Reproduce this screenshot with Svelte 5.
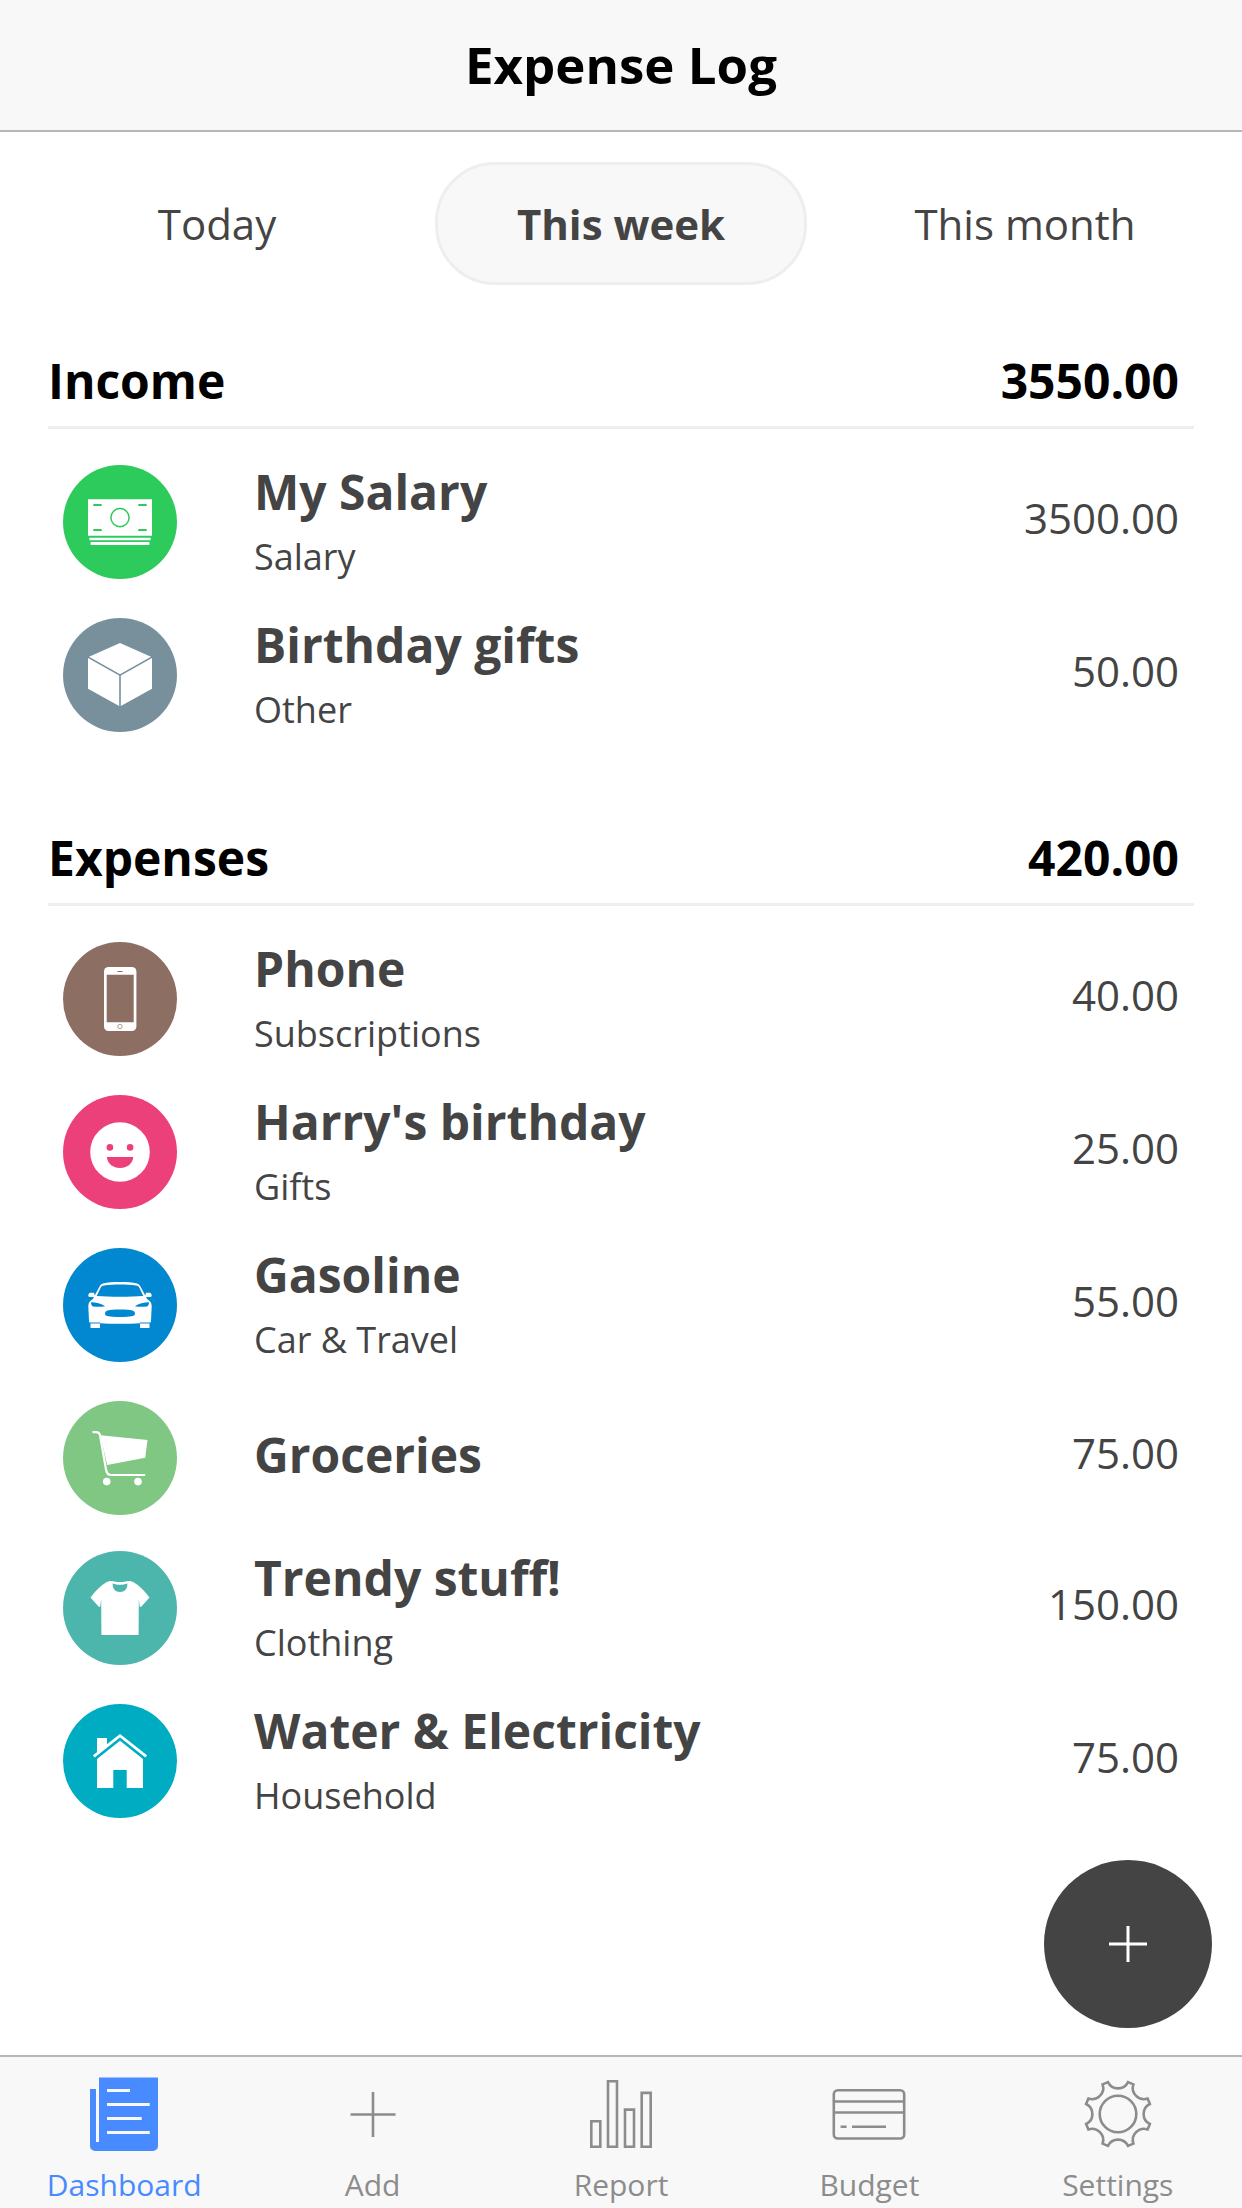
<script>
  const periods = ['Today', 'This week', 'This month'];
  let period = $state('This week');

  const sections = [
    {
      title: 'Income',
      total: '3550.00',
      rows: [
        { icon: 'cash', title: 'My Salary', category: 'Salary', amount: '3500.00' },
        { icon: 'cube', title: 'Birthday gifts', category: 'Other', amount: '50.00' }
      ]
    },
    {
      title: 'Expenses',
      total: '420.00',
      rows: [
        { icon: 'phone', title: 'Phone', category: 'Subscriptions', amount: '40.00' },
        { icon: 'smile', title: "Harry's birthday", category: 'Gifts', amount: '25.00' },
        { icon: 'car', title: 'Gasoline', category: 'Car & Travel', amount: '55.00' },
        { icon: 'cart', title: 'Groceries', category: '', amount: '75.00' },
        { icon: 'shirt', title: 'Trendy stuff!', category: 'Clothing', amount: '150.00' },
        { icon: 'home', title: 'Water & Electricity', category: 'Household', amount: '75.00' }
      ]
    }
  ];

  const tabs = ['Dashboard', 'Add', 'Report', 'Budget', 'Settings'];
  let tab = $state('Dashboard');

  // Eight scallops round the centre, joined by short straight teeth.
  function gearPath(cx, cy, r, half, scallop) {
    const at = (deg) => {
      const a = (deg * Math.PI) / 180;
      return `${(cx + r * Math.cos(a)).toFixed(2)} ${(cy + r * Math.sin(a)).toFixed(2)}`;
    };
    let d = '';
    for (let k = 0; k < 8; k++) {
      const mid = k * 45 - 90;
      d += `${k ? 'L' : 'M'}${at(mid - half)}A${scallop} ${scallop} 0 0 0 ${at(mid + half)}`;
    }
    return d + 'Z';
  }
  const gear = gearPath(42, 42, 33.4, 17.5, 11.2);
</script>

{#snippet rowIcon(name)}
  <svg class="badge {name}" viewBox="0 0 114 114" aria-hidden="true">
    {#if name === 'cash'}
      <path d="M25 34.3h64v36.4H25zM26.4 72.7h61.2v2.5H26.4zM27.6 77h58.8v3H27.6z" />
      <circle class="cut-line" cx="57" cy="52.6" r="9.1" />
      <path class="cut" d="M30.3 39h8.4v2h-8.4zM75.3 39h8.4v2h-8.4zM30.3 64h8.4v2h-8.4zM75.3 64h8.4v2h-8.4z" />
    {:else if name === 'cube'}
      <path d="M57 25 88 38.7 57 56.3 26 38.7zM25 40l31.2 17.6V88L25 70.7zM89 40 57.8 57.6V88L89 70.7z" />
    {:else if name === 'phone'}
      <rect x="41" y="25" width="32.4" height="64" rx="4.5" />
      <path class="cut" d="M43.7 32.7h27v47.6h-27zM54.5 29h5v1h-5z" />
      <circle class="cut-line thin" cx="57" cy="84.5" r="2.2" />
    {:else if name === 'smile'}
      <circle cx="57" cy="57" r="29.8" />
      <circle class="cut" cx="46.9" cy="52.4" r="3.3" />
      <circle class="cut" cx="67.1" cy="52.4" r="3.3" />
      <path class="cut" d="M43.9 62h26.4C69.500 69 64 73 57 73s-12.400-4-13.100-11z" />
    {:else if name === 'car'}
      <path d="M57 34c7 0 12.500.3 17 1.400 2 .6 2.600 1.300 3.600 3.300L82.300 47.500 83 44.800h3.500c1.600.3 2.200 1.200 2.200 2.700 0 1.200-.7 1.500-2.200 1.500H83l1.300 2.300c2.600 1.300 4.400 3.500 4.400 7L88 73c-.1 1.300-.5 1.800-1.500 1.800V80H77v-4.800c-6 .5-13 .6-20 .6s-14-.1-20-.6V80h-9.500v-5.200c-1 0-1.400-.5-1.500-1.800l-.7-14.700c0-3.500 1.800-5.700 4.400-7L31 49h-3.500c-1.500 0-2.200-.3-2.200-1.500 0-1.500.6-2.400 2.200-2.700H31l.7 2.700 4.700-8.800c1-2 1.600-2.700 3.600-3.300 4.500-1.100 10-1.400 17-1.400z" />
      <path class="cut" d="M33.700 48 37.500 40c.9-1.700 1.500-2.200 3.500-2.500C46 36.800 51 36.600 57 36.600s11 .2 16 .9c2 .3 2.600.8 3.500 2.500L80.300 48C74 48.600 66 48.700 57 48.700S40 48.600 33.700 48zM28 54.200c5 0 10.500 1 14.200 4.100-4 .6-8 .7-12 .2-1.500-.2-2.200-2.300-2.200-4.300zM86 54.200c-5 0-10.500 1-14.200 4.100 4 .6 8 .7 12 .2 1.500-.2 2.200-2.300 2.200-4.300zM57 61.500c6 0 10 .3 12.500.9 1.700.5 2.500 1.500 2.500 3s-.9 2.200-2.500 2.700c-3 .8-7 1-12.500 1s-9.500-.2-12.500-1c-1.600-.5-2.500-1.200-2.500-2.700s.8-2.500 2.500-3c2.500-.6 6.500-.9 12.500-.9z" />
      <path class="cut" d="M26.500 74.600h10.700v.8H26.500zM76.800 74.600h10.700v.8H76.800z" />
    {:else if name === 'cart'}
      <path d="M37.500 34.300 84.500 39 82.200 56.700 44.200 64z" />
      <path class="line" d="M29.500 31.200h3.500c2.500 0 3.800 1.300 4.200 4L43 68.500c.7 4 2.200 5.500 5 5.500h34.200" />
      <circle cx="43.700" cy="80.600" r="3.800" />
      <circle cx="75" cy="80.600" r="3.800" />
    {:else if name === 'shirt'}
      <path d="M49.500 30c3 1.400 12 1.400 15 0 2.500 0 4.500.4 6.500 1.500 5.500 3.300 10.500 8.300 15.500 15L78 56l-1.300-.4-.9-7.800-.2 36.200H38.400l-.2-36.200-.9 7.800L36 56l-8.500-9.500c5-6.700 10-11.700 15.500-15 2-1.100 4-1.500 6.500-1.500z" />
      <path class="cut" d="M49.700 32.500c4.500 1.800 10.100 1.800 14.600 0 .5 5-2.800 8.500-7.300 8.500s-7.800-3.500-7.300-8.500z" />
    {:else}
      <path d="M34 34h10v7.200L34 49zM57 36.700 80 55v29H63.700V66H50.300v18H34V55z" />
      <path class="roof" d="M30.800 52.300 57 31.700l26.200 20.600" />
    {/if}
  </svg>
{/snippet}

{#snippet tabIcon(name)}
  <svg class="tab-icon" viewBox="0 0 84 84" aria-hidden="true">
    {#if name === 'Dashboard'}
      <path class="solid" fill-rule="evenodd" d="M17 5.500h59V74a5 5 0 0 1-5 5H13a5 5 0 0 1-5-5V17h6v53h3zM25 17v3h23v-3zM25 31v3h42.700v-3zM25 45v3h34.700v-3zM25 59v3h42.700v-3z" />
    {:else if name === 'Add'}
      <path d="M19.500 42.500h45M42 20v45" />
    {:else if name === 'Report'}
      <path d="M12.300 49.300h9v25.400h-9zM29 9.300h9v65.400h-9zM46 37.600h9v37.100h-9zM62.700 20.900h9v53.800h-9z" />
    {:else if name === 'Budget'}
      <rect x="6.800" y="18.300" width="70.400" height="48.200" rx="4" />
      <path d="M7 29.500h70M7 40.500h70M13.600 54.700h6M25 54.700h34" />
    {:else}
      <circle cx="42" cy="42" r="18.300" />
      <path d={gear} />
    {/if}
  </svg>
{/snippet}

<div class="app">
  <header class="top">
    <h1>Expense Log</h1>
  </header>

  <main>
    <div class="periods">
      {#each periods as name}
        <button type="button" class:active={period === name} aria-pressed={period === name} onclick={() => (period = name)}>{name}</button>
      {/each}
    </div>

    {#each sections as section}
      <section>
        <div class="heading">
          <h2>{section.title}</h2>
          <strong>{section.total}</strong>
        </div>
        <ul>
          {#each section.rows as row}
            <li>
              {@render rowIcon(row.icon)}
              <div class="label">
                <h3>{row.title}</h3>
                {#if row.category}<p>{row.category}</p>{/if}
              </div>
              <span class="amount">{row.amount}</span>
            </li>
          {/each}
        </ul>
      </section>
    {/each}

    <button type="button" class="fab" aria-label="Add entry">
      <svg viewBox="0 0 38 38" aria-hidden="true"><path d="M0 19h38M19 1v36" /></svg>
    </button>
  </main>

  <nav>
    {#each tabs as name}
      <a href="#{name.toLowerCase()}" class:current={tab === name} onclick={() => (tab = name)}>
        {@render tabIcon(name)}
        <span>{name}</span>
      </a>
    {/each}
  </nav>
</div>

<style>
  :global(body) {
    background: #fff;
  }

  .app {
    display: flex;
    flex-direction: column;
    min-height: 100vh;
    font-family: 'Open Sans', 'Noto Sans', sans-serif;
    color: #444;
  }

  h1,
  h2,
  h3,
  p,
  ul {
    margin: 0;
    padding: 0;
  }

  button {
    font: inherit;
    color: inherit;
    cursor: pointer;
  }

  .top {
    padding: 29px 30px 31px;
    background: #f8f8f8;
    border-bottom: 2px solid #b6b6b6;
    text-align: center;
    color: #000;
  }

  h1 {
    font-size: 51px;
    line-height: 70px;
    font-weight: 700;
  }

  main {
    position: relative;
    flex: 1;
  }

  .periods {
    display: grid;
    grid-template-columns: repeat(3, 1fr);
    gap: 32px;
    padding: 30px 31px 0;
  }

  .periods button {
    padding: 30px 0;
    border: 3px solid transparent;
    border-radius: 60px;
    background: none;
    font-size: 42px;
    line-height: 57px;
  }

  .periods button.active {
    background: #f8f8f8;
    border-color: #eee;
    font-weight: 700;
  }

  section {
    padding: 63px 48px 9px;
  }

  .heading {
    display: flex;
    justify-content: space-between;
    margin-bottom: 18px;
    padding: 0 15px 12px 0;
    border-bottom: 3px solid #eee;
    line-height: 66px;
    color: #000;
  }

  h2,
  .heading strong {
    font-size: 48px;
    font-weight: 700;
  }

  ul {
    list-style: none;
  }

  li {
    display: flex;
    align-items: center;
    padding: 18px 15px;
  }

  .badge {
    flex: none;
    align-self: flex-start;
    width: 114px;
    height: 114px;
    border-radius: 50%;
    background: var(--tone);
    fill: #fff;
  }

  .cash { --tone: #2dca5c; }
  .cube { --tone: #78909c; }
  .phone { --tone: #8d6e63; }
  .smile { --tone: #ec407a; }
  .car { --tone: #0288d1; }
  .cart { --tone: #81c784; }
  .shirt { --tone: #4db6ac; }
  .home { --tone: #00acc1; }

  .cut {
    fill: var(--tone);
  }

  .cut-line {
    fill: none;
    stroke: var(--tone);
    stroke-width: 1.5;
  }

  .cut-line.thin {
    stroke-width: 0.7;
  }

  .line {
    fill: none;
    stroke: #fff;
    stroke-width: 2.2;
  }

  .roof {
    fill: none;
    stroke: #fff;
    stroke-width: 2.8;
  }

  .label {
    flex: 1;
    padding-left: 77px;
  }

  h3 {
    margin-bottom: 6px;
    font-size: 48px;
    line-height: 54px;
    font-weight: 700;
  }

  p {
    padding-top: 6px;
    font-size: 36px;
    line-height: 51px;
  }

  .amount {
    padding-bottom: 12px;
    font-size: 42px;
    line-height: 57px;
  }

  .fab {
    position: absolute;
    right: 30px;
    bottom: 27px;
    display: flex;
    align-items: center;
    justify-content: center;
    width: 168px;
    height: 168px;
    border: 0;
    border-radius: 50%;
    background: #444;
  }

  .fab svg {
    width: 38px;
    height: 38px;
    stroke: #fff;
    stroke-width: 3;
  }

  nav {
    display: grid;
    grid-template-columns: repeat(5, 1fr);
    background: #f8f8f8;
    border-top: 2px solid #b6b6b6;
  }

  nav a {
    display: flex;
    flex-direction: column;
    align-items: center;
    padding: 15px 0 3px;
    gap: 9px;
    color: #8c8c8c;
    font-size: 30px;
    line-height: 40px;
    text-decoration: none;
  }

  nav a.current {
    color: #488aff;
  }

  .tab-icon {
    width: 84px;
    height: 84px;
    fill: none;
    stroke: currentColor;
    stroke-width: 2.6;
  }

  .solid {
    fill: currentColor;
    stroke: none;
  }
</style>
